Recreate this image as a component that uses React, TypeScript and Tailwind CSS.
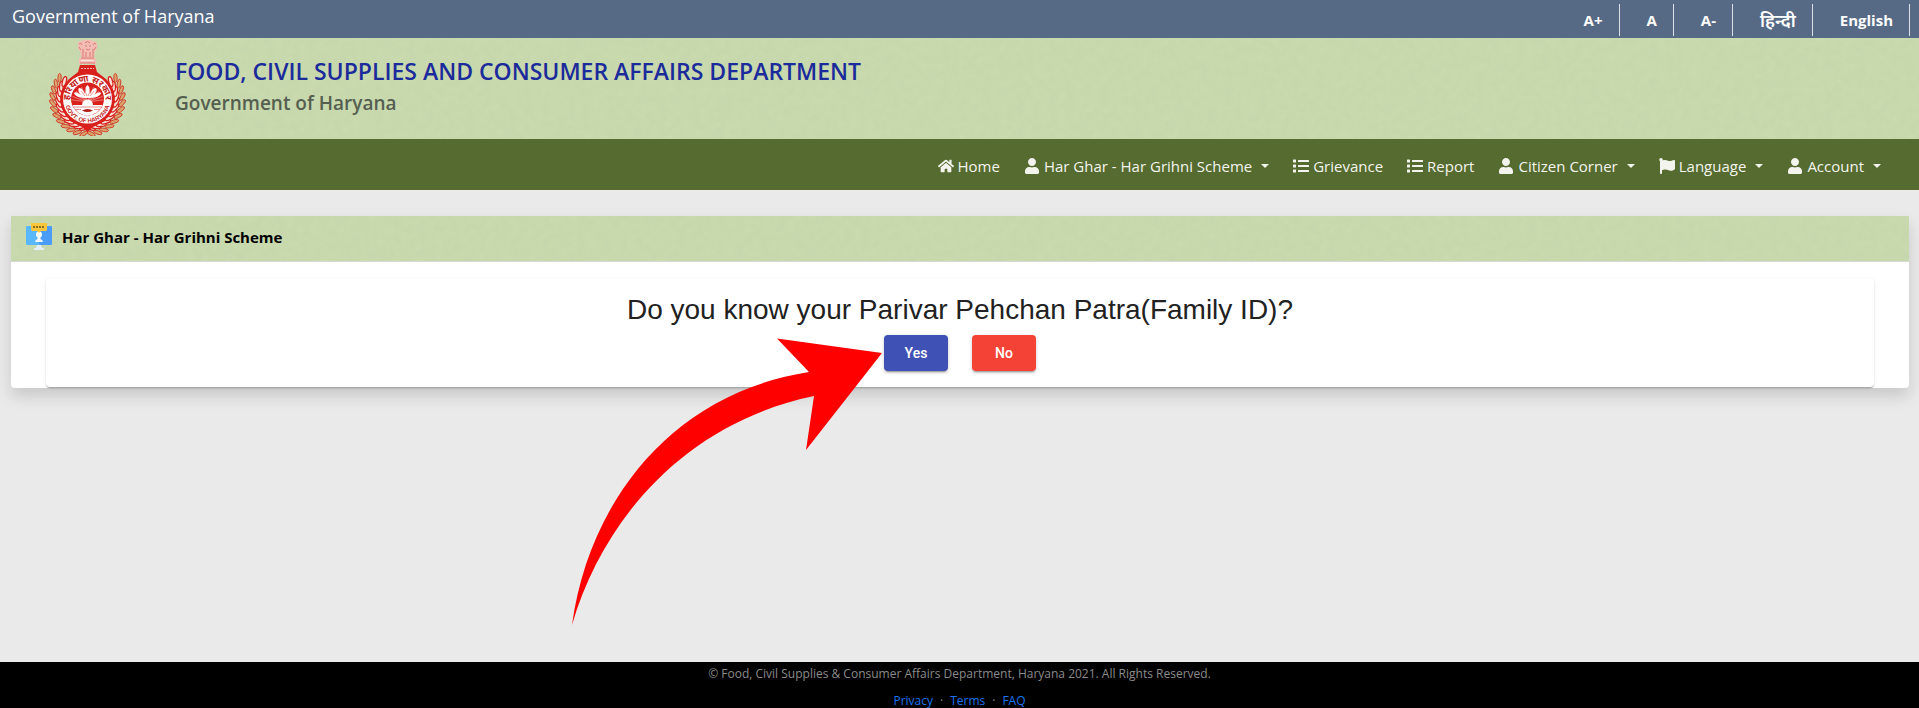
import type { ReactNode } from "react"
import { FaFlag, FaHome, FaList, FaUser } from "react-icons/fa"
import clsx from "clsx"

const topLinks = ["A+", "A", "A-", "हिन्दी", "English"]

const navItems = [
  { label: "Home", icon: FaHome, dropdown: false },
  { label: "Har Ghar - Har Grihni Scheme", icon: FaUser, dropdown: true },
  { label: "Grievance", icon: FaList, dropdown: false },
  { label: "Report", icon: FaList, dropdown: false },
  { label: "Citizen Corner", icon: FaUser, dropdown: true },
  { label: "Language", icon: FaFlag, dropdown: true },
  { label: "Account", icon: FaUser, dropdown: true },
]

const footerLinks = ["Privacy", "Terms", "FAQ"]

// leaf angles around the wreath, measured from the bottom
const leaves = [6, 17, 28, 39, 50, 61, 72, 83, 94, 105, 116, 127]

function Paper({ id }: { id: string }) {
  return (
    <svg className="pointer-events-none absolute inset-0 h-full w-full opacity-10" aria-hidden="true">
      <filter id={id}>
        <feTurbulence type="fractalNoise" baseFrequency="0.12" numOctaves="3" seed="4" />
        <feColorMatrix type="matrix" values="0 0 0 0 0.45  0 0 0 0 0.5  0 0 0 0 0.4  1.6 0 0 0 -0.4" />
      </filter>
      <rect width="100%" height="100%" filter={`url(#${id})`} />
    </svg>
  )
}

function Emblem() {
  return (
    <svg viewBox="0 0 78 98" className="relative h-[98px] w-[78px]" role="img" aria-label="Emblem">
      <defs>
        <path id="arcTop" d="M23 69 A18 18 0 1 1 56 69" />
        <path id="arcBottom" d="M16.800 64 A22.800 22.800 0 0 0 62.200 64" />
      </defs>
      {/* wreath */}
      {[1, -1].map((side) =>
        leaves.map((a) => (
          <g key={`${side}${a}`} transform={`rotate(${side * a} 39.5 61)`}>
            <ellipse cx="39.500" cy="96" rx="1.700" ry="4.500" fill="#dba46c" stroke="#cf2a20" strokeWidth="0.8" transform={`rotate(${side * 55} 39.5 96)`} />
            <ellipse cx="39.500" cy="90" rx="1.900" ry="5" fill="#f8e3d6" stroke="#d9201d" strokeWidth="1.300" transform={`rotate(${side * 68} 39.5 90)`} />
          </g>
        ))
      )}
      {/* shield body */}
      <path d="M32 27 H47 L49 34 Q54 38 59 42 L66 61 L57 83 L45 89 L39.500 94 L34 89 L22 83 L13 61 L20 42 Q25 38 30 34 Z" fill="#d9201d" />
      <circle cx="39.500" cy="61" r="27" fill="#d9201d" />
      <circle cx="39.500" cy="61" r="24.500" fill="#fff" />
      <circle cx="39.500" cy="61" r="16.500" fill="#d9201d" />
      {/* lotus over rays */}
      <g stroke="#f6c6c0" strokeWidth="0.5">
        {[-82, -70, -58, -46, -34, -22, 22, 34, 46, 58, 70, 82].map((a) => (
          <path key={a} d="M39.500 64 V48" transform={`rotate(${a} 39.5 64)`} />
        ))}
      </g>
      <path d="M39.500 47 Q43 50 42 56 Q45 49 48 50 Q50 53 46 57 Q51 53 53 55 Q52 60 39.500 60 Q27 60 26 55 Q28 53 33 57 Q29 53 31 50 Q34 49 37 56 Q36 50 39.500 47Z" fill="#fff" />
      <path d="M37.500 50 Q36.500 55 39 58 M41.500 50 Q42.500 55 40 58 M33 53 L37 58 M46 53 L42 58" fill="none" stroke="#dc5049" strokeWidth="0.6" />
      <path d="M34 67 A5.500 5.500 0 0 1 45 67Z" fill="#fff" />
      <path d="M24.500 67 H54.500 A16 16 0 0 1 24.500 67Z" fill="#fff" />
      <path d="M26 69 H53 M27 71.500 H33 M46 71.500 H52" stroke="#e2665f" strokeWidth="0.7" />
      <path d="M34 72.500 Q39.500 69.500 45 72.500 Q39.500 75.500 34 72.500Z" fill="#b11c18" />
      <text fill="#c41c19" fontSize="9" fontWeight="700" fontFamily="'Noto Sans', 'Noto Sans Devanagari', sans-serif">
        <textPath href="#arcTop" startOffset="50%" textAnchor="middle">हरियाणा सरकार</textPath>
      </text>
      <text fill="#c41c19" fontSize="6" fontWeight="700" fontFamily="'Liberation Sans', Arial, sans-serif">
        <textPath href="#arcBottom" startOffset="50%" textAnchor="middle">GOVT. OF HARYANA</textPath>
      </text>
      {/* lion capital */}
      <path d="M30 6 Q30 3 33 3 Q36 1 39 2 Q43 1 45 3 Q49 3 49 6 Q50 10 47 13 L46 20 H48 V26 H31 V20 H33 L32 13 Q29 10 30 6Z" fill="#f1bdb5" />
      <path d="M31 6 Q33 4 34 7 M45 7 Q46 4 48 6 M37 5 Q39.500 2 42 5 M37 8 H39 M41 8 H43 M38 11 Q40 13 42 11 M35 11 V19 M38 14 V19 M42 14 V19 M45 11 V19 M31 9 L33 12 M48 9 L46 12 M33 20 H46 M32 25 H47" fill="none" stroke="#d9675f" strokeWidth="0.8" />
      <path d="M33 22.500 H46" stroke="#f9e6df" strokeWidth="1" />
      <path d="M33 30.500 H46" stroke="#f4b8b2" strokeWidth="1.200" strokeDasharray="2 1" />
    </svg>
  )
}

function SchemeIcon() {
  return (
    <svg viewBox="0 0 26 27" className="relative h-[27px] w-[26px]" aria-hidden="true">
      <rect x="0" y="3" width="13" height="19" rx="1" fill="#58b8fb" />
      <rect x="13" y="3" width="13" height="19" rx="1" fill="#4a9cf5" />
      <path d="M11 22 H15 L16 25 H18 V27 H8 V25 H10Z" fill="#e3eefb" />
      <circle cx="13" cy="11.500" r="3" fill="#fff" />
      <path d="M11.500 12 H14.500 V16 Q17 17 17 19 H9 Q9 17 11.500 16Z" fill="#f1f6fd" />
      <path d="M5 0 H21 V7 L20 8 H15 L13 10 L11 8 H6 L5 7Z" fill="#fbc63c" />
      <path d="M7 4 H19" stroke="#6b5317" strokeWidth="1.500" strokeDasharray="2 1" />
    </svg>
  )
}

function Arrow() {
  return (
    <svg
      viewBox="572 337 310 288"
      className="pointer-events-none absolute top-[3px] right-full mr-0.5 h-72 w-[310px] max-w-none"
      aria-hidden="true"
    >
      <path d="M572 624 C588 505 668 393 809 371 L777 337.500 L882 352 L806 449 L814 395 C684 422 602 520 572 624Z" fill="#fe0000" />
    </svg>
  )
}

function ActionButton({ className, children }: { className: string; children: ReactNode }) {
  return (
    <button
      type="button"
      className={clsx(
        "h-9 w-16 rounded font-['Roboto',sans-serif] text-sm font-medium text-white shadow-[0_3px_1px_-2px_rgba(0,0,0,0.2),0_2px_2px_0_rgba(0,0,0,0.14),0_1px_5px_0_rgba(0,0,0,0.12)]",
        className
      )}
    >
      {children}
    </button>
  )
}

export default function App() {
  return (
    <div className="flex min-h-screen flex-col bg-[#eaeaea] font-['Open_Sans','Noto_Sans',sans-serif] text-base text-black">
      <div className="flex h-[38px] items-start justify-between bg-[#566985] pr-[9px] pl-3 text-white">
        <span className="pt-1 text-lg leading-6">Government of Haryana</span>
        <ul className="flex pt-1">
          {topLinks.map((label) => (
            <li key={label} className="border-r border-white/80 pr-4 pl-[27px]">
              <a
                href="#"
                className={clsx("block leading-8", label === "हिन्दी" ? "text-lg font-semibold" : "text-[15px] font-bold")}
              >
                {label}
              </a>
            </li>
          ))}
        </ul>
      </div>

      <header className="relative flex h-[101px] items-start bg-[#c9daae] pl-12">
        <Paper id="paperHeader" />
        <Emblem />
        <div className="relative pt-[17px] pl-[49px]">
          <h1 className="text-[23px] leading-8 font-semibold text-[#1b2b9b]">
            FOOD, CIVIL SUPPLIES AND CONSUMER AFFAIRS DEPARTMENT
          </h1>
          <p className="text-[19px] leading-8 font-semibold text-[#555f50]">Government of Haryana</p>
        </div>
      </header>

      <nav className="flex h-[51px] items-center justify-end gap-6 bg-[#556b2f] pt-0.5 pr-[38px]">
        {navItems.map(({ label, icon: Icon, dropdown }) => (
          <a key={label} href="#" className="flex items-center gap-1 text-[15px] leading-6 text-[#f4f4ee]">
            <Icon className="h-4 w-auto" />
            <span>{label}</span>
            {dropdown && (
              <span className="ml-[5px] border-x-4 border-t-4 border-x-transparent border-t-[#f4f4ee]" />
            )}
          </a>
        ))}
      </nav>

      <main className="flex-1 pt-[26px] pr-2.5 pl-[11px]">
        <section className="rounded bg-white shadow-[0_8px_16px_rgba(0,0,0,0.15)]">
          <div className="relative flex h-[46px] items-center gap-2.5 border-b border-[#d8d8d8] bg-[#c9daae] pb-1 pl-[15px]">
            <Paper id="paperCard" />
            <SchemeIcon />
            <h2 className="relative text-[15px] leading-6 font-bold">Har Ghar - Har Grihni Scheme</h2>
          </div>
          <div className="px-[35px] pt-4 pb-px">
            <div className="flex flex-col items-center rounded bg-white px-4 pt-[15px] pb-4 shadow-[0_2px_1px_-1px_rgba(0,0,0,0.2),0_1px_1px_0_rgba(0,0,0,0.14),0_1px_3px_0_rgba(0,0,0,0.12)]">
              <p className="mb-2 font-['Liberation_Sans',Arial,sans-serif] text-[28px] leading-[34px] text-[#212121]">
                Do you know your Parivar Pehchan Patra(Family ID)?
              </p>
              <div className="flex gap-6">
                <div className="relative flex">
                  <ActionButton className="bg-[#3f51b5]">Yes</ActionButton>
                  <Arrow />
                </div>
                <ActionButton className="bg-[#f44336]">No</ActionButton>
              </div>
            </div>
          </div>
        </section>
      </main>

      <footer className="flex h-[46px] flex-col items-center gap-[7px] bg-black pt-0.5 text-xs leading-5 text-[#8b8b8b]">
        <p>© Food, Civil Supplies &amp; Consumer Affairs Department, Haryana 2021. All Rights Reserved.</p>
        <p className="flex gap-[7px]">
          {footerLinks.map((label, i) => (
            <span key={label} className="flex gap-[7px]">
              {i > 0 && <span>·</span>}
              <a href="#" className="text-[#1a73f0]">
                {label}
              </a>
            </span>
          ))}
        </p>
      </footer>
    </div>
  )
}
